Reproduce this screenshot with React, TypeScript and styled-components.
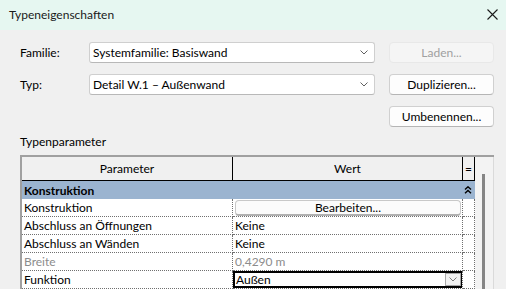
import React from 'react'
import styled, { createGlobalStyle } from 'styled-components'

const FONT = 'Lato, "Noto Sans", Arial, sans-serif'

interface Row {
  name: string
  value: string
  kind?: 'text' | 'button' | 'select'
  muted?: boolean
}

const ROWS: Row[] = [
  { name: 'Konstruktion', value: 'Bearbeiten...', kind: 'button' },
  { name: 'Abschluss an Öffnungen', value: 'Keine' },
  { name: 'Abschluss an Wänden', value: 'Keine' },
  { name: 'Breite', value: '0,4290 m', muted: true },
  { name: 'Funktion', value: 'Außen', kind: 'select' },
]

const Chevron = ({ color = '#606060' }: { color?: string }) => (
  <svg width='8' height='5' viewBox='0 0 8 5'>
    <path d='M0.5 0.5 L4 4 L7.5 0.5' fill='none' stroke={color} strokeWidth='1' />
  </svg>
)

const App: React.FC = () => {
  return (
    <>
      <GlobalStyle />
      <Window>
        <TitleBar>
          <Title>Typeneigenschaften</Title>
          <CloseIcon width='11' height='11' viewBox='0 0 11 11'>
            <path d='M0.5 0.5 L10.5 10.5 M10.5 0.5 L0.5 10.5' stroke='#1a1a1a' strokeWidth='1.1' />
          </CloseIcon>
        </TitleBar>

        <Body>
          {/* Familie / Typ */}
          <FormGrid>
            <Label>Familie:</Label>
            <Select>
              <span>Systemfamilie: Basiswand</span>
              <Chevron />
            </Select>
            <Button disabled>Laden...</Button>

            <Label>Typ:</Label>
            <Select>
              <span>Detail W.1 – Außenwand</span>
              <Chevron />
            </Select>
            <Button>Duplizieren...</Button>

            <span />
            <span />
            <Button>Umbenennen...</Button>
          </FormGrid>

          <SectionLabel>Typenparameter</SectionLabel>

          {/* Parameter-Tabelle */}
          <TableFrame>
            <Grid>
              <HeadCell>Parameter</HeadCell>
              <HeadCell>Wert</HeadCell>
              <HeadCell>=</HeadCell>

              <GroupCell>
                <span>Konstruktion</span>
                <svg width='8' height='8' viewBox='0 0 8 8'>
                  <path d='M1 3.5 L4 0.8 L7 3.5 M1 7.2 L4 4.5 L7 7.2' fill='none' stroke='#000' strokeWidth='1.4' />
                </svg>
              </GroupCell>

              {ROWS.map((row) => (
                <React.Fragment key={row.name}>
                  <Cell $muted={row.muted}>{row.name}</Cell>
                  <Cell $muted={row.muted} $flush={row.kind !== undefined && row.kind !== 'text'}>
                    {row.kind === 'button' && <EditButton>{row.value}</EditButton>}
                    {row.kind === 'select' && (
                      <CellSelect>
                        <span>{row.value}</span>
                        <DropButton>
                          <Chevron color='#7a7a7a' />
                        </DropButton>
                      </CellSelect>
                    )}
                    {row.kind === undefined && row.value}
                  </Cell>
                  <Cell />
                </React.Fragment>
              ))}
            </Grid>
            <ScrollTrack>
              <ScrollThumb />
            </ScrollTrack>
          </TableFrame>
        </Body>
      </Window>
    </>
  )
}

export default App

const GlobalStyle = createGlobalStyle`
  * {
    box-sizing: border-box;
  }
  body {
    margin: 0;
    background: #f0f0f0;
    font-family: ${FONT};
  }
`

const Window = styled.div`
  width: 506px;
  height: 289px;
  overflow: hidden;
  background: #f0f0f0;
  color: #000;
  font-size: 12px;
`

const TitleBar = styled.div`
  height: 30px;
  background: #e6f7f1;
  display: flex;
  align-items: center;
  justify-content: space-between;
  padding: 0 8px 2px 9px;
`

const Title = styled.div`
  font-size: 12px;
  color: #1a1a1a;
`

const CloseIcon = styled.svg`
  display: block;
`

const Body = styled.div`
  padding: 11px 12px 0 20px;
`

const FormGrid = styled.div`
  display: grid;
  grid-template-columns: 69px 286px 119px;
  grid-template-rows: 22px 22px 22px;
  row-gap: 10px;
  align-items: center;
`

const Label = styled.div`
  font-size: 12px;
`

const Select = styled.div`
  height: 21px;
  background: #fff;
  border: 1px solid #cfcfcf;
  border-bottom-color: #b8b8b8;
  border-radius: 3px;
  display: flex;
  align-items: center;
  justify-content: space-between;
  padding: 0 6px 0 3px;
`

const Button = styled.button`
  justify-self: end;
  height: 21px;
  width: 105px;
  border-radius: 4px;
  border: 1px solid #d0d0d0;
  border-bottom-color: #b5b5b5;
  background: #fdfdfd;
  font-family: ${FONT};
  font-size: 12px;
  color: #000;
  padding: 0;

  &:disabled {
    background: #f5f5f5;
    border-color: #e8e8e8;
    color: #a0a0a0;
  }
`

const SectionLabel = styled.div`
  margin-top: 7px;
  line-height: 16px;
  font-size: 12px;
`

const TableFrame = styled.div`
  margin-top: 5px;
  width: 474px;
  display: flex;
  border-top: 2px solid #a0a0a0;
  border-left: 2px solid #a0a0a0;
`

const Grid = styled.div`
  display: grid;
  grid-template-columns: 211px 230px 12px;
  grid-auto-rows: 18px;
  grid-template-rows: 24px 18px;
  background: #fff;
  align-content: start;
`

const HeadCell = styled.div`
  background: #f0f0f0;
  border-right: 1px solid #000;
  border-bottom: 1px solid #000;
  display: flex;
  align-items: center;
  justify-content: center;
  font-size: 12px;
`

const GroupCell = styled.div`
  grid-column: 1 / -1;
  background: #9bb4d0;
  display: flex;
  align-items: center;
  justify-content: space-between;
  padding: 0 3px 0 2px;
  font-weight: 700;
`

const Cell = styled.div<{ $muted?: boolean; $flush?: boolean }>`
  border-right: 1px dotted #707070;
  border-bottom: 1px dotted #707070;
  padding: ${(p) => (p.$flush ? '0' : '0 2px')};
  display: flex;
  align-items: center;
  white-space: nowrap;
  overflow: hidden;
  color: ${(p) => (p.$muted ? '#8c8c8c' : '#000')};
`

const EditButton = styled.div`
  flex: 1;
  height: 16px;
  margin: 0 1px 0 2px;
  border: 1px solid #c8c8c8;
  border-bottom: 2px solid #b0b0b0;
  border-radius: 4px;
  background: #fbfbfb;
  display: flex;
  align-items: center;
  justify-content: center;
`

const CellSelect = styled.div`
  flex: 1;
  align-self: stretch;
  border: 2px solid #000;
  border-right-width: 1px;
  display: flex;
  align-items: center;
  justify-content: space-between;
  padding-left: 1px;
`

const DropButton = styled.div`
  width: 16px;
  align-self: stretch;
  background: #f2f2f2;
  border: 1px solid #a8a8a8;
  display: flex;
  align-items: center;
  justify-content: center;
`

const ScrollTrack = styled.div`
  width: 20px;
  background: #f3f3f3;
  border-right: 1px solid #dadada;
  display: flex;
  justify-content: center;
  padding-top: 17px;
  padding-right: 2px;
`

const ScrollThumb = styled.div`
  width: 3px;
  height: 200px;
  background: #858585;
`
